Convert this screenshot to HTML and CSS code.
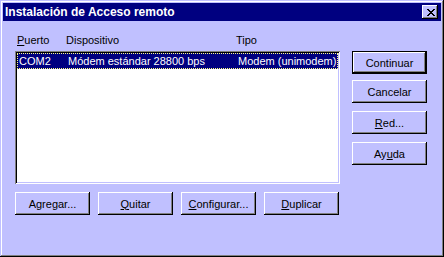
FILE: index.html
```html
<!DOCTYPE html>
<html>
<head>
<meta charset="utf-8">
<link rel="stylesheet" href="styles.css">
</head>
<body>
<div class="window">
  <div class="titlebar">
    <span class="title">Instalación de Acceso remoto</span>
    <span class="close"><svg width="8" height="7" viewBox="0 0 8 7"><path d="M0 0h2v1h1v1h2v-1h1v-1h2v1h-1v1h-1v1h-1v1h1v1h1v1h1v1h-2v-1h-1v-1h-2v1h-1v1h-2v-1h1v-1h1v-1h1v-1h-1v-1h-1v-1h-1z" fill="#000"/></svg></span>
  </div>
  <div class="body">
    <div class="leftcol">
      <div class="headers">
        <span class="h-port"><u>P</u>uerto</span>
        <span class="h-dev">Dispositivo</span>
        <span class="h-type">Tipo</span>
      </div>
      <div class="listbox">
        <div class="row selected">
          <span class="c-port">COM2</span>
          <span class="c-dev">Módem estándar 28800 bps</span>
          <span class="c-type">Modem (unimodem)</span>
        </div>
      </div>
      <div class="bottombtns">
        <button class="btn">Agregar...</button>
        <button class="btn"><u>Q</u>uitar</button>
        <button class="btn"><u>C</u>onfigurar...</button>
        <button class="btn"><u>D</u>uplicar</button>
      </div>
    </div>
    <div class="rightcol">
      <button class="btn default">Continuar</button>
      <button class="btn b-cancel">Cancelar</button>
      <button class="btn b-red"><u>R</u>ed...</button>
      <button class="btn b-help">Ay<u>u</u>da</button>
    </div>
  </div>
</div>
</body>
</html>
```
FILE: styles.css
```css
html, body {
  margin: 0;
  padding: 0;
  background: #c0c0ff;
}
body {
  font-family: "Liberation Sans", Arial, sans-serif;
  font-size: 11px;
  color: #000;
}
.window {
  width: 444px;
  height: 257px;
  box-sizing: border-box;
  padding: 3px;
  background: #c0c0ff;
  box-shadow: inset -1px -1px #000, inset 1px 1px #c0c0ff, inset -2px -2px #808080, inset 2px 2px #fff;
}
.titlebar {
  height: 18px;
  background: #000080;
  color: #fff;
  display: flex;
  align-items: center;
  justify-content: space-between;
  padding: 0 3px 0 2px;
}
.title {
  font-weight: bold;
  font-size: 12px;
  line-height: 18px;
}
.close {
  width: 16px;
  height: 14px;
  box-sizing: border-box;
  background: #c0c0ff;
  box-shadow: inset -1px -1px #000, inset 1px 1px #fff, inset -2px -2px #808080;
  display: flex;
  align-items: center;
  justify-content: center;
  padding-left: 1px;
}
.close svg { display: block; }
.body {
  display: flex;
  padding: 13px 0 0 12px;
}
.leftcol {
  width: 325px;
}
.headers {
  height: 17px;
  position: relative;
  line-height: 13px;
}
.headers span { position: absolute; top: 0; }
.h-port { left: 2px; }
.h-dev { left: 51px; }
.h-type { left: 221px; }
.listbox {
  height: 133px;
  background: #fff;
  box-sizing: border-box;
  padding: 2px;
  box-shadow: inset 1px 1px #808080, inset -1px -1px #fff, inset 2px 2px #000, inset -2px -2px #c0c0ff;
}
.row {
  height: 16px;
  position: relative;
  line-height: 16px;
}
.row.selected {
  background: #000080;
  color: #fff;
  outline: 1px dotted #ffff80;
  outline-offset: -1px;
}
.row span { position: absolute; top: 0; }
.c-port { left: 2px; }
.c-dev { left: 51px; }
.c-type { left: 221px; }
.bottombtns {
  display: flex;
  gap: 8px;
  margin-top: 8px;
}
.btn {
  width: 75px;
  height: 23px;
  box-sizing: border-box;
  border: 0;
  margin: 0;
  padding: 0;
  background: #c0c0ff;
  font-family: "Liberation Sans", Arial, sans-serif;
  font-size: 11px;
  color: #000;
  box-shadow: inset -1px -1px #000, inset 1px 1px #fff, inset -2px -2px #808080;
}
.btn.default {
  box-shadow: inset 0 0 0 1px #000, inset -2px -2px #000, inset 2px 2px #fff, inset -3px -3px #808080;
}
.rightcol {
  display: flex;
  flex-direction: column;
  margin-left: 12px;
  padding-top: 17px;
}
.b-cancel { margin-top: 6px; }
.b-red { margin-top: 8px; }
.b-help { margin-top: 8px; }
```
